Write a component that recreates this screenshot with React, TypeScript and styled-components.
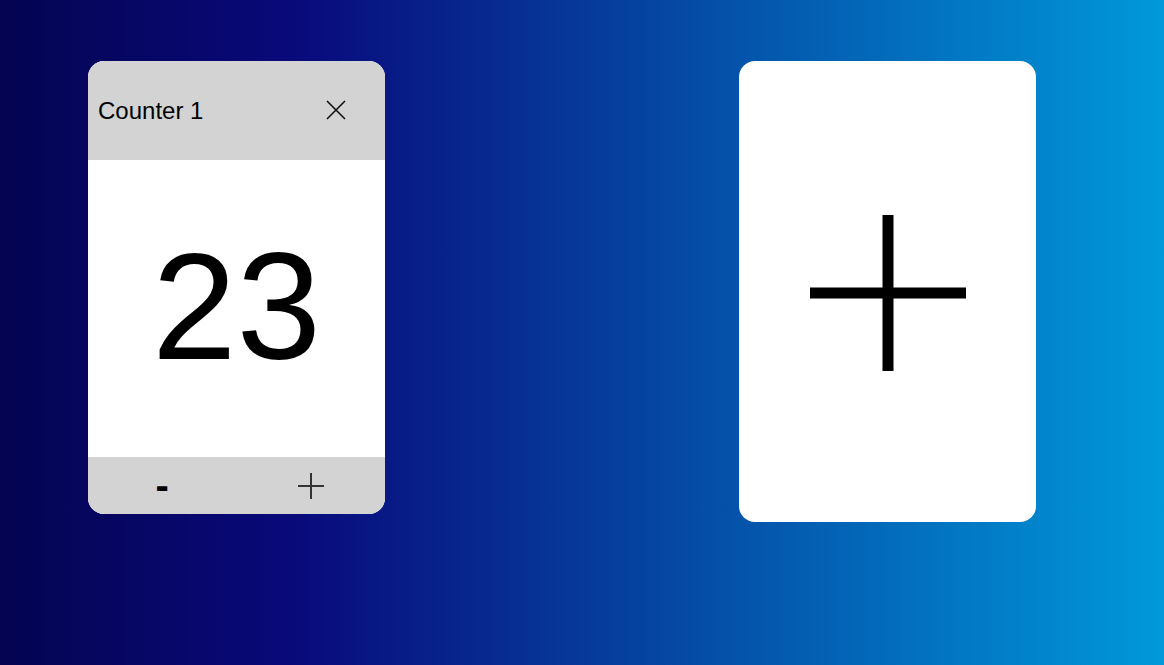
import { useState } from 'react';
import styled, { createGlobalStyle } from 'styled-components';

const GlobalStyle = createGlobalStyle`
  html, body {
    margin: 0;
    padding: 0;
    height: 100%;
  }
  body {
    font-family: "Liberation Sans", Arial, sans-serif;
    background: linear-gradient(90deg, #040452 0%, #09097a 25%, #0099d9 100%);
    overflow: hidden;
  }
`;

const Board = styled.main`
  display: flex;
  align-items: flex-start;
  gap: 354px;
  padding: 61px 0 0 88px;
  min-height: 100vh;
  box-sizing: border-box;
`;

const Card = styled.section`
  width: 297px;
  border-radius: 16px;
  overflow: hidden;
  background: #ffffff;
  display: flex;
  flex-direction: column;
`;

const Header = styled.header`
  height: 99px;
  background: #d3d3d3;
  display: flex;
  align-items: center;
  justify-content: space-between;
  padding: 0 39px 0 10px;
`;

const Title = styled.h2`
  margin: 0;
  font-size: 24px;
  font-weight: normal;
  color: #000;
`;

const IconButton = styled.button`
  background: none;
  border: none;
  padding: 0;
  margin: 0 0 2px 0;
  cursor: pointer;
  display: flex;
  align-items: center;
  justify-content: center;
`;

const Value = styled.div`
  height: 297px;
  box-sizing: border-box;
  padding-bottom: 4px;
  display: flex;
  align-items: center;
  justify-content: center;
  font-size: 152px;
  color: #000;
`;

const Footer = styled.footer`
  height: 57px;
  background: #d3d3d3;
  display: flex;
`;

const StepButton = styled.button`
  flex: 1;
  background: none;
  border: none;
  padding: 0;
  cursor: pointer;
  display: flex;
  align-items: center;
  justify-content: center;
  font-family: inherit;
  font-size: 40px;
  font-weight: bold;
  color: #000;
`;

const AddCard = styled.button`
  width: 297px;
  height: 461px;
  border: none;
  border-radius: 16px;
  background: #ffffff;
  cursor: pointer;
  display: flex;
  align-items: center;
  justify-content: center;
  padding: 3px 0 0 0;
`;

const CloseIcon = () => (
  <svg width="20" height="20" viewBox="0 0 20 20">
    <path d="M1 1 L19 19 M19 1 L1 19" stroke="#111" strokeWidth="1.6" fill="none" />
  </svg>
);

const PlusIcon = ({ size, stroke, color }: { size: number; stroke: number; color: string }) => (
  <svg width={size} height={size} viewBox={`0 0 ${size} ${size}`}>
    <path
      d={`M${size / 2} 0 V${size} M0 ${size / 2} H${size}`}
      stroke={color}
      strokeWidth={stroke}
      fill="none"
    />
  </svg>
);

export default function App() {
  const [count, setCount] = useState(23);

  return (
    <>
      <GlobalStyle />
      <Board>
        <Card>
          <Header>
            <Title>Counter 1</Title>
            <IconButton aria-label="Remove counter">
              <CloseIcon />
            </IconButton>
          </Header>
          <Value>{count}</Value>
          <Footer>
            <StepButton onClick={() => setCount(count - 1)}>-</StepButton>
            <StepButton onClick={() => setCount(count + 1)}>
              <PlusIcon size={26} stroke={2} color="#333" />
            </StepButton>
          </Footer>
        </Card>
        <AddCard aria-label="Add counter">
          <PlusIcon size={156} stroke={11} color="#000" />
        </AddCard>
      </Board>
    </>
  );
}
